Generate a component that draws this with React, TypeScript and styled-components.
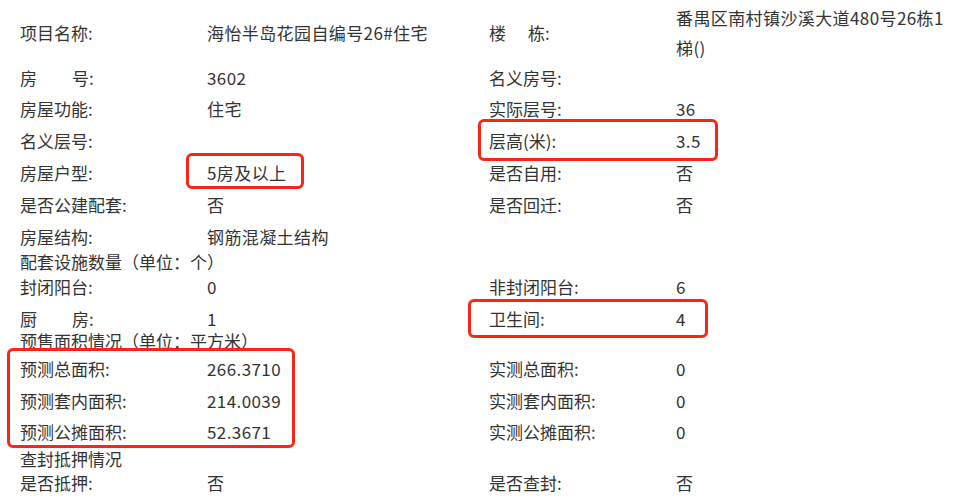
import React from "react";
import styled, { createGlobalStyle } from "styled-components";

const GlobalStyle = createGlobalStyle`
  html, body { margin: 0; padding: 0; background: #ffffff; }
  body {
    font-family: "Noto Sans CJK SC", "Noto Sans", sans-serif;
    color: #333333;
    font-size: 17px;
  }
`;

const Page = styled.div`
  position: relative;
  width: 977px;
  height: 500px;
  overflow: hidden;
  padding: 1px 0 0 20px;
  box-sizing: border-box;
`;

const Row = styled.div<{ $h: number; $tall?: boolean }>`
  display: grid;
  grid-template-columns: 187px 282px 187px 276px;
  height: ${(p) => p.$h}px;
  align-items: ${(p) => (p.$tall ? "center" : "start")};
  padding-top: ${(p) => (p.$tall ? 0 : 4)}px;
  box-sizing: border-box;
  line-height: 20px;
  white-space: nowrap;
`;

const Label = styled.div`
  white-space: nowrap;
`;

const Value = styled.div`
  white-space: nowrap;
  letter-spacing: 0.4px;
`;

const WrapValue = styled.div`
  white-space: normal;
  line-height: 30px;
  letter-spacing: 0.4px;
  word-break: break-all;
`;

const Section = styled.div<{ $h: number }>`
  height: ${(p) => p.$h}px;
  padding-top: 4px;
  box-sizing: border-box;
  line-height: 20px;
  white-space: nowrap;
`;

const Gap = styled.span<{ $w: number }>`
  display: inline-block;
  width: ${(p) => p.$w}px;
`;

const Mark = styled.div<{ $x: number; $y: number; $w: number; $h: number }>`
  position: absolute;
  left: ${(p) => p.$x}px;
  top: ${(p) => p.$y}px;
  width: ${(p) => p.$w}px;
  height: ${(p) => p.$h}px;
  border: 3.5px solid #fa2418;
  border-radius: 6px;
  box-sizing: border-box;
  pointer-events: none;
`;

type R = [React.ReactNode, React.ReactNode, React.ReactNode, React.ReactNode, number];

const rowsA: R[] = [
  [<>房<Gap $w={35} />号:</>, "3602", "名义房号:", "", 31],
  ["房屋功能:", "住宅", "实际层号:", "36", 32],
  ["名义层号:", "", "层高(米):", "3.5", 32],
  ["房屋户型:", "5房及以上", "是否自用:", "否", 32],
  ["是否公建配套:", "否", "是否回迁:", "否", 31.5],
  ["房屋结构:", "钢筋混凝土结构", "", "", 25.5],
];

const rowsB: R[] = [
  ["封闭阳台:", "0", "非封闭阳台:", "6", 32],
  [<>厨<Gap $w={35} />房:</>, "1", "卫生间:", "4", 22],
];

const rowsC: R[] = [
  ["预测总面积:", "266.3710", "实测总面积:", "0", 31.5],
  ["预测套内面积:", "214.0039", "实测套内面积:", "0", 31.5],
  ["预测公摊面积:", "52.3671", "实测公摊面积:", "0", 26.5],
];

const rowsD: R[] = [["是否抵押:", "否", "是否查封:", "否", 26]];

const renderRows = (rows: R[]) =>
  rows.map((r, i) => (
    <Row key={i} $h={r[4]}>
      <Label>{r[0]}</Label>
      <Value>{r[1]}</Value>
      <Label>{r[2]}</Label>
      <Value>{r[3]}</Value>
    </Row>
  ));

export default function App() {
  return (
    <>
      <GlobalStyle />
      <Page>
        <Row $h={63} $tall>
          <Label>项目名称:</Label>
          <Value>海怡半岛花园自编号26#住宅</Value>
          <Label>
            楼<Gap $w={22} />栋:
          </Label>
          <WrapValue>番禺区南村镇沙溪大道480号26栋1梯()</WrapValue>
        </Row>
        {renderRows(rowsA)}
        <Section $h={25}>配套设施数量（单位：个）</Section>
        {renderRows(rowsB)}
        <Section $h={28}>预售面积情况（单位：平方米）</Section>
        {renderRows(rowsC)}
        <Section $h={24}>查封抵押情况</Section>
        {renderRows(rowsD)}

        <Mark $x={186} $y={153} $w={118} $h={36} />
        <Mark $x={478} $y={119} $w={240} $h={42} />
        <Mark $x={468} $y={299} $w={240} $h={39} />
        <Mark $x={7} $y={348} $w={288} $h={100} />
      </Page>
    </>
  );
}
